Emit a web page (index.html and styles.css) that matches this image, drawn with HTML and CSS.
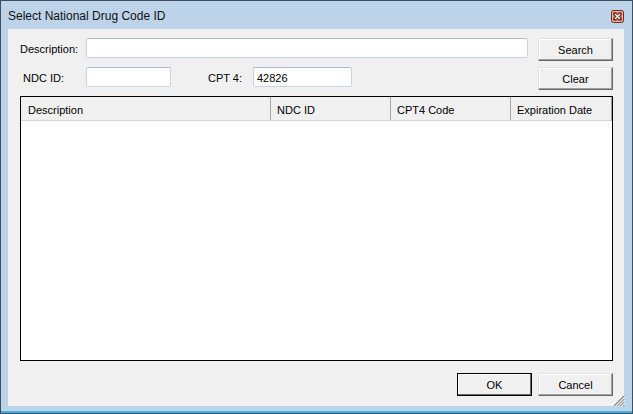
FILE: index.html
```html
<!DOCTYPE html>
<html lang="en">
<head>
    <meta charset="UTF-8">
    <title>Select National Drug Code ID</title>
    <link rel="stylesheet" href="styles.css">
</head>
<body>
    <div class="window">
        <div class="titlebar">
            <span class="title">Select National Drug Code ID</span>
            <span class="close-btn">
                <svg width="13" height="13" viewBox="0 0 13 13">
                    <rect x="0.5" y="0.5" width="12" height="12" rx="2" fill="#d9705c" stroke="#6e2a1c"/>
                    <rect x="1.5" y="1.5" width="10" height="10" rx="1" fill="none" stroke="#f0b4a4"/>
                    <path d="M4 4 L9 9 M9 4 L4 9" stroke="#5a1e14" stroke-width="3" stroke-linecap="square"/>
                    <path d="M4 4 L9 9 M9 4 L4 9" stroke="#fff" stroke-width="1.4"/>
                </svg>
            </span>
        </div>

        <div class="client">
            <div class="top">
                <div class="fields">
                    <div class="row">
                        <label class="lbl lbl-desc">Description:</label>
                        <div class="textbox textbox-wide"></div>
                    </div>
                    <div class="row">
                        <label class="lbl lbl-ndc">NDC ID:</label>
                        <div class="textbox textbox-ndc"></div>
                        <label class="lbl lbl-cpt">CPT 4:</label>
                        <div class="textbox textbox-cpt">42826</div>
                    </div>
                </div>
                <div class="side-buttons">
                    <div class="btn">Search</div>
                    <div class="btn">Clear</div>
                </div>
            </div>

            <div class="listview">
                <div class="list-header">
                    <div class="col col-desc">Description</div>
                    <div class="col col-ndc">NDC ID</div>
                    <div class="col col-cpt">CPT4 Code</div>
                    <div class="col col-exp">Expiration Date</div>
                </div>
            </div>

            <div class="bottom">
                <div class="btn btn-default">OK</div>
                <div class="btn">Cancel</div>
            </div>

            <!-- size grip -->
            <svg class="grip" width="13" height="13" viewBox="0 0 13 13">
                <path d="M12 2 L2 12 M12 5 L5 12 M12 8 L8 12 M12 11 L11 12" stroke="#8a8a8a" stroke-width="1.2"/>
                <path d="M13 3 L3 13 M13 6 L6 13 M13 9 L9 13" stroke="#fff" stroke-width="0.8"/>
            </svg>
        </div>
    </div>
</body>
</html>
```

FILE: styles.css
```css
body {
    margin: 0;
    background-color: #fff;
    font-family: "Liberation Sans", Arial, sans-serif;
    font-size: 11px;
    color: #000;
}
.window {
    box-sizing: border-box;
    width: 633px;
    height: 414px;
    display: flex;
    flex-direction: column;
    background-color: #bdd3ea;
    border: 1px solid #3e4e60;
    padding: 0 8px 7px 7px;
    box-shadow: inset 0 -2px 0 #39b4e4;
}
.titlebar {
    height: 28px;
    display: flex;
    align-items: center;
    justify-content: space-between;
    padding-top: 2px;
    box-sizing: border-box;
}
.title {
    font-size: 12px;
    color: #111;
}
.close-btn {
    display: flex;
}
.client {
    flex: 1;
    position: relative;
    display: flex;
    flex-direction: column;
    background-color: #f0f0f0;
    padding: 9px 11px 10px 12px;
}

/* top form */
.top {
    display: flex;
    gap: 10px;
}
.fields {
    flex: 1;
    display: flex;
    flex-direction: column;
    gap: 9px;
}
.row {
    display: flex;
    align-items: center;
    height: 20px;
}
.lbl {
    white-space: nowrap;
    padding-top: 2px;
}
.lbl-desc {
    width: 66px;
}
.lbl-ndc {
    width: 63px;
    padding-left: 3px;
}
.lbl-cpt {
    width: 45px;
    padding-left: 37px;
}
.textbox {
    box-sizing: border-box;
    height: 20px;
    background-color: #fff;
    border: 1px solid #c5d5e6;
    border-top-color: #abbdd2;
    border-radius: 2px;
    padding: 4px 3px 0;
    line-height: 13px;
}
.textbox-wide {
    flex: 1;
}
.textbox-ndc {
    width: 85px;
}
.textbox-cpt {
    width: 99px;
}
.side-buttons {
    display: flex;
    flex-direction: column;
    gap: 6px;
}

/* buttons */
.btn {
    box-sizing: border-box;
    width: 75px;
    height: 23px;
    display: flex;
    align-items: center;
    justify-content: center;
    padding-top: 1px;
    background-color: #f0f0f0;
    border: 1px solid;
    border-color: #e3e3e3 #696969 #696969 #e3e3e3;
    box-shadow: inset -1px -1px 0 #a0a0a0, inset 1px 1px 0 #fff;
}
.btn-default {
    border-color: #000;
    box-shadow: inset -1px -1px 0 #696969, inset 1px 1px 0 #fff;
}

/* list view */
.listview {
    flex: 1;
    margin-top: 6px;
    background-color: #fff;
    border: 1px solid #000;
}
.list-header {
    display: flex;
    height: 23px;
    background-color: #f0f0f0;
    border-bottom: 1px solid #d5d5d5;
    margin-right: 1px;
    box-shadow: 1px 0 0 #a0a0a0;
}
.col {
    box-sizing: border-box;
    display: flex;
    align-items: center;
    padding: 3px 0 0 6px;
    border-right: 1px solid #a8a8a8;
}
.col-desc {
    width: 250px;
    padding-left: 7px;
}
.col-ndc,
.col-cpt {
    width: 120px;
}
.col-exp {
    flex: 1;
    border-right: none;
}

/* dialog buttons */
.bottom {
    display: flex;
    justify-content: flex-end;
    gap: 6px;
    margin-top: 12px;
}
.grip {
    position: absolute;
    right: -1px;
    bottom: -1px;
}
```
